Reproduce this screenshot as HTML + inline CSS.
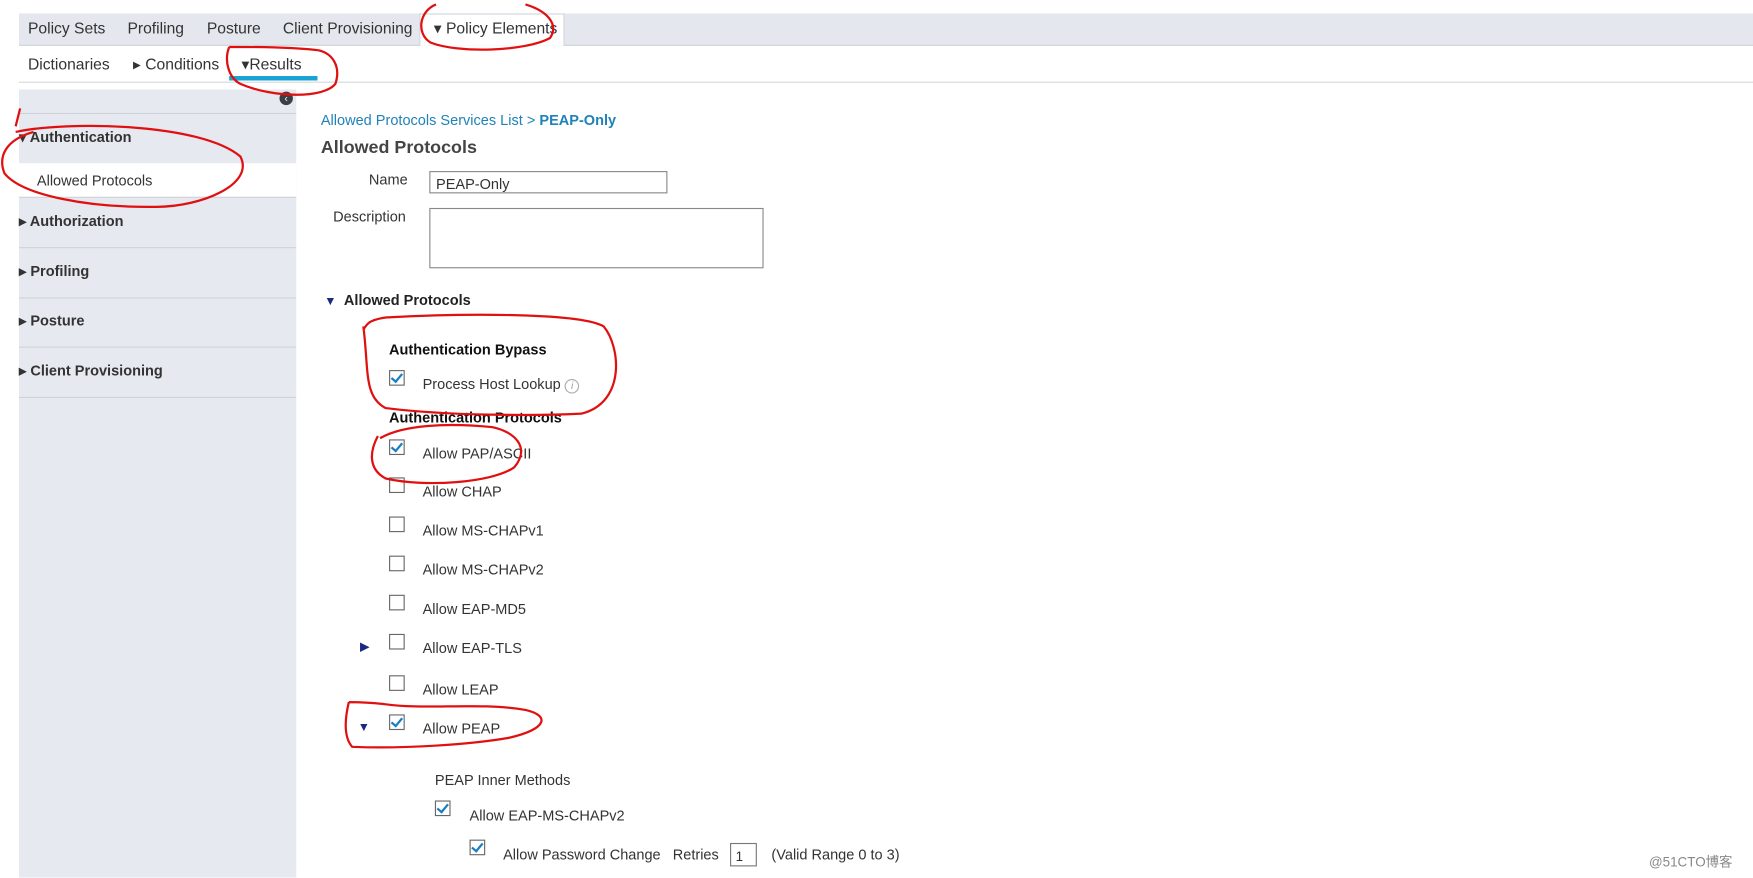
<!DOCTYPE html>
<html><head><meta charset="utf-8"><style>
html,body{margin:0;padding:0;background:#fff;width:1753px;height:878px;overflow:hidden}
#w{position:absolute;left:0;top:0;width:1568px;height:785px;transform:scale(1.11798);transform-origin:0 0;font-family:"Liberation Sans",Arial,sans-serif;color:#333;font-size:13px}
.a{position:absolute;white-space:nowrap}
.nav{position:absolute;left:17px;top:12px;width:1551px;height:28px;background:#e4e8ee;border-bottom:1px solid #d0d4da}
.t{position:absolute;top:5px;font-size:14px;color:#333}
.side{position:absolute;left:17px;top:80px;width:248px;height:705px;background:#e6e9ef}
.hl{position:absolute;left:17px;width:248px;height:1px;background:#cfd3d9}
.sb{font-weight:bold;color:#333}
.cb{position:absolute;width:12px;height:12px;border:1px solid #666;background:#fff}
.ck:after{content:"";position:absolute;left:3px;top:0px;width:4px;height:8px;border:solid #1a7fc0;border-width:0 2px 2px 0;transform:rotate(40deg)}
.lb{font-size:13px;color:#333}
</style></head><body><div id="w">
<div class="nav">
<span class="t" style="left:8px">Policy Sets</span>
<span class="t" style="left:97px">Profiling</span>
<span class="t" style="left:168px">Posture</span>
<span class="t" style="left:236px">Client Provisioning</span>
<div style="position:absolute;left:358px;top:0;width:130px;height:29px;background:#fff;border:1px solid #d0d4da;border-bottom:none;box-sizing:border-box"></div>
<span class="t" style="left:371px">▾ Policy Elements</span>
</div>
<span class="a" style="left:25px;top:49px;font-size:14px">Dictionaries</span>
<span class="a" style="left:119px;top:49px;font-size:14px">▸ Conditions</span>
<span class="a" style="left:216px;top:49px;font-size:14px">▾Results</span>
<div class="a" style="left:205px;top:68px;width:79px;height:4px;background:#18a3d2"></div>
<div class="a" style="left:17px;top:73px;width:1551px;height:1px;background:#d5d8dc"></div>
<div class="side"></div>
<div class="a" style="left:250px;top:82px;width:12px;height:12px;border-radius:50%;background:#3a3f44;color:#fff;font-size:9px;line-height:12px;text-align:center">‹</div>
<div class="hl" style="top:101px"></div>
<span class="a sb" style="left:17px;top:115px">▾ Authentication</span>
<div class="a" style="left:17px;top:146px;width:248px;height:30px;background:#fff"></div>
<span class="a" style="left:33px;top:154px">Allowed Protocols</span>
<div class="hl" style="top:176px"></div>
<span class="a sb" style="left:17px;top:190px">▸ Authorization</span>
<div class="hl" style="top:221px"></div>
<span class="a sb" style="left:17px;top:235px">▸ Profiling</span>
<div class="hl" style="top:266px"></div>
<span class="a sb" style="left:17px;top:279px">▸ Posture</span>
<div class="hl" style="top:310px"></div>
<span class="a sb" style="left:17px;top:324px">▸ Client Provisioning</span>
<div class="hl" style="top:355px"></div>

<span class="a" style="left:287px;top:100px;color:#1f82b8">Allowed Protocols Services List &gt; <b>PEAP-Only</b></span>
<span class="a" style="left:287px;top:124px;font-size:16px;font-weight:bold;color:#444">Allowed Protocols</span>
<span class="a" style="left:330px;top:153px">Name</span>
<div class="a" style="left:384px;top:153px;width:213px;height:20px;border:1px solid #888;box-sizing:border-box;padding:3px 5px">PEAP-Only</div>
<span class="a" style="left:298px;top:186px">Description</span>
<div class="a" style="left:384px;top:186px;width:299px;height:54px;border:1px solid #888;box-sizing:border-box"></div>
<span class="a sb" style="left:290px;top:261px;color:#222"><span style="color:#1a2a80;font-size:11px">▼</span>&nbsp; Allowed Protocols</span>
<span class="a sb" style="left:348px;top:305px;color:#111">Authentication Bypass</span>
<div class="cb ck" style="left:348px;top:331px"></div><span class="a lb" style="left:378px;top:336px">Process Host Lookup <span style="display:inline-block;width:11px;height:11px;border:1px solid #aaa;border-radius:50%;font-size:9px;line-height:11px;text-align:center;color:#999;font-style:italic">i</span></span>
<span class="a sb" style="left:348px;top:366px;color:#111">Authentication Protocols</span>
<div class="cb ck" style="left:348px;top:393px"></div><span class="a lb" style="left:378px;top:398px">Allow PAP/ASCII</span>
<div class="cb" style="left:348px;top:427px"></div><span class="a lb" style="left:378px;top:432px">Allow CHAP</span>
<div class="cb" style="left:348px;top:462px"></div><span class="a lb" style="left:378px;top:467px">Allow MS-CHAPv1</span>
<div class="cb" style="left:348px;top:497px"></div><span class="a lb" style="left:378px;top:502px">Allow MS-CHAPv2</span>
<div class="cb" style="left:348px;top:532px"></div><span class="a lb" style="left:378px;top:537px">Allow EAP-MD5</span>
<span class="a" style="left:322px;top:572px;color:#1a2a80;font-size:11px">▶</span>
<div class="cb" style="left:348px;top:567px"></div><span class="a lb" style="left:378px;top:572px">Allow EAP-TLS</span>
<div class="cb" style="left:348px;top:604px"></div><span class="a lb" style="left:378px;top:609px">Allow LEAP</span>
<span class="a" style="left:320px;top:645px;color:#1a2a80;font-size:11px">▼</span>
<div class="cb ck" style="left:348px;top:639px"></div><span class="a lb" style="left:378px;top:644px">Allow PEAP</span>
<span class="a lb" style="left:389px;top:690px">PEAP Inner Methods</span>
<div class="cb ck" style="left:389px;top:716px"></div><span class="a lb" style="left:420px;top:722px">Allow EAP-MS-CHAPv2</span>
<div class="cb ck" style="left:420px;top:751px"></div><span class="a lb" style="left:450px;top:757px">Allow Password Change &nbsp; Retries</span>
<div class="a" style="left:653px;top:754px;width:24px;height:21px;border:1px solid #777;box-sizing:border-box;padding:4px 4px;font-size:12px">1</div>
<span class="a lb" style="left:690px;top:757px">(Valid Range 0 to 3)</span>
<span class="a" style="left:1475px;top:762px;color:#888;font-size:12px;font-family:'Liberation Sans','Noto Sans CJK SC',sans-serif">@51CTO博客</span>

<svg class="a" style="left:0;top:0" width="1568" height="785" fill="none" stroke="#e01010" stroke-width="2">
<path d="M390 4 C375 10 372 30 385 38 C410 48 470 46 492 34 C500 22 490 10 470 4"/>
<path d="M205 42 C200 55 205 70 215 75 C245 88 290 88 300 75 C305 60 298 48 285 45 C260 42 230 42 205 42"/>
<path d="M18 97 L14 113 M14 118 C60 108 180 110 215 140 C228 165 180 185 140 185 C80 186 20 175 4 155 C-2 140 5 125 30 118"/>
<path d="M325 292 C330 330 325 355 345 365 C400 372 480 372 520 370 C560 360 555 310 540 292 C520 280 420 280 345 284 C330 286 328 290 325 295"/>
<path d="M338 390 C330 405 330 420 345 428 C380 436 440 432 460 418 C475 400 460 386 440 382 C400 378 360 380 340 392"/>
<path d="M312 628 C308 645 308 660 315 668 C360 670 420 666 455 660 C490 652 492 640 470 635 C430 628 380 635 345 630 C330 628 320 628 312 628"/>
</svg>
</div></body></html>
